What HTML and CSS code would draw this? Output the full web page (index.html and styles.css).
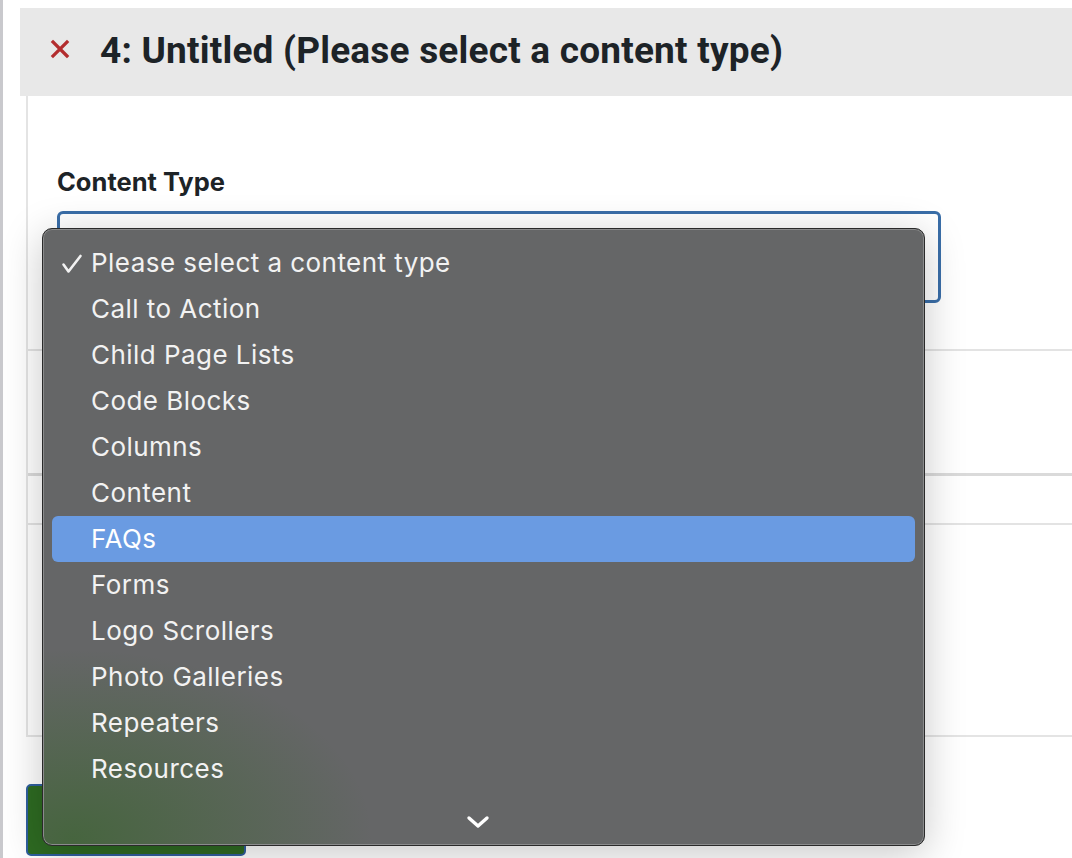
FILE: index.html
```html
<!DOCTYPE html>
<html>
<head>
<meta charset="utf-8">
<link rel="stylesheet" href="styles.css">
</head>
<body>
<div class="page">
  <div class="wrap">
    <div class="header">
      <span class="close">
        <svg width="20" height="20" viewBox="0 0 20 20"><path d="M3 3L17 17M17 3L3 17" stroke="#b32d2e" stroke-width="3.2" stroke-linecap="square"/></svg>
      </span>
      <h1 class="title">4: Untitled (Please select a content type)</h1>
    </div>
    <div class="panel">
      <div class="field">
        <div class="label">Content Type</div>
        <div class="select"></div>
      </div>
      <div class="row row-a"></div>
      <div class="row row-b"></div>
      <div class="row row-c"></div>
    </div>
    <div class="btn"></div>
  </div>

  <div class="menu">
    <ul class="items">
      <li class="item"><span class="check"><svg width="22" height="20" viewBox="0 0 22 20"><path d="M2.5 10.5L7.5 17.5L19.5 2" fill="none" stroke="#f2f2f2" stroke-width="2.6" stroke-linecap="round" stroke-linejoin="round"/></svg></span>Please select a content type</li>
      <li class="item">Call to Action</li>
      <li class="item">Child Page Lists</li>
      <li class="item">Code Blocks</li>
      <li class="item">Columns</li>
      <li class="item">Content</li>
      <li class="item selected">FAQs</li>
      <li class="item">Forms</li>
      <li class="item">Logo Scrollers</li>
      <li class="item">Photo Galleries</li>
      <li class="item">Repeaters</li>
      <li class="item">Resources</li>
    </ul>
    <div class="more">
      <svg width="24" height="14" viewBox="0 0 24 14"><path d="M3 3L12 11L21 3" fill="none" stroke="#ffffff" stroke-width="3.4" stroke-linecap="round" stroke-linejoin="round"/></svg>
    </div>
  </div>
</div>
</body>
</html>
```

FILE: styles.css
```css
html, body {
  margin: 0;
  padding: 0;
  background: #ffffff;
}
.page {
  position: relative;
  width: 1072px;
  height: 858px;
  overflow: hidden;
  border-left: 3px solid #c9c9cd;
  box-sizing: border-box;
  font-family: Inter, "Noto Sans", sans-serif;
}
.wrap {
  padding: 8px 0 0 17px;
}
.header {
  height: 88px;
  background: #e8e8e8;
  display: flex;
  align-items: center;
  padding-left: 30px;
}
.close {
  display: flex;
  width: 20px;
  height: 20px;
  margin-right: 30px;
  margin-top: -6px;
}
.title {
  margin: 0;
  font-family: Roboto, "Liberation Sans", sans-serif;
  font-weight: 700;
  font-size: 37px;
  color: #1d2327;
  letter-spacing: 0.2px;
  margin-top: -4px;
}
.panel {
  margin-left: 6px;
  border-left: 2px solid #e4e4e4;
  border-bottom: 2px solid #e4e4e4;
  height: 641px;
  box-sizing: border-box;
  display: flex;
  flex-direction: column;
}
.field {
  padding: 71px 0 0 29px;
}
.label {
  font-weight: 700;
  font-size: 25.5px;
  color: #1d2327;
  height: 30px;
  line-height: 30px;
}
.select {
  margin-top: 14px;
  width: 884px;
  height: 92px;
  box-sizing: border-box;
  border: 3px solid #3a6ea8;
  border-radius: 6px;
}
.row {
  background: #e3e3e3;
}
.row-a {
  height: 2px;
  margin-top: 46px;
}
.row-b {
  height: 3px;
  margin-top: 122px;
  background: #dadada;
}
.row-c {
  height: 2px;
  margin-top: 47px;
}
.btn {
  margin: 47px 0 0 6px;
  width: 220px;
  height: 72px;
  box-sizing: border-box;
  background: #2e6b22;
  border: 2px solid #2f5f9e;
  border-radius: 5px;
}

/* native popup menu overlay */
.menu {
  position: absolute;
  left: 39px;
  top: 228px;
  width: 883px;
  height: 618px;
  box-sizing: border-box;
  border-radius: 10px;
  border: 1px solid #2a2a2a;
  box-shadow: inset 0 0 0 1px #8a8b8c, 0 8px 40px rgba(0,0,0,0.22);
  background:
    radial-gradient(ellipse 300px 190px at 30px 610px, rgba(50,100,36,0.6), rgba(50,100,36,0) 100%),
    #656667;
  padding: 11px 9px 0 9px;
  display: flex;
  flex-direction: column;
}
.items {
  list-style: none;
  margin: 0;
  padding: 0;
}
.item {
  height: 46px;
  line-height: 46px;
  padding-left: 39px;
  position: relative;
  font-size: 26px;
  letter-spacing: 0.45px;
  color: #f2f2f2;
  border-radius: 6px;
}
.item.selected {
  background: #6a9be2;
  color: #ffffff;
}
.check {
  position: absolute;
  left: 9px;
  top: 14px;
  width: 22px;
  height: 20px;
  display: flex;
}
.more {
  display: flex;
  justify-content: center;
  margin-top: 23px;
}
.more svg {
  margin-left: -11px;
}
```
